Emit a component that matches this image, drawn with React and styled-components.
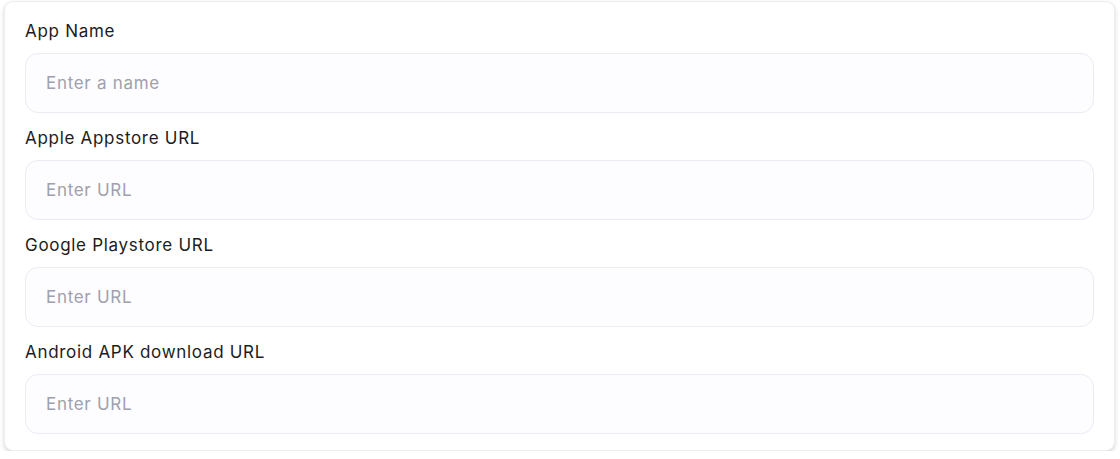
import React from "react"
import styled, { createGlobalStyle } from "styled-components"

const GlobalStyle = createGlobalStyle`
  body {
    margin: 0;
    background: #ffffff;
    font-family: "Inter", "Noto Sans", sans-serif;
  }
`

const Page = styled.div`
  padding: 1px 5px 0 4px;
`

const Card = styled.div`
  background: #ffffff;
  border: 1px solid #ececf2;
  border-radius: 9px;
  box-shadow: 0 2px 4px rgba(0, 0, 0, 0.16);
  padding: 19px 20px 16px 20px;
  display: flex;
  flex-direction: column;
  gap: 15px;
`

const Field = styled.div`
  display: flex;
  flex-direction: column;
  gap: 12px;
`

const Label = styled.label`
  font-size: 17px;
  line-height: 20px;
  color: #1c1c22;
  letter-spacing: 0.7px;
`

const Input = styled.input`
  box-sizing: border-box;
  width: 100%;
  height: 60px;
  border: 1px solid #ebebf3;
  border-radius: 13px;
  background: #fdfdff;
  padding: 0 20px;
  font-family: inherit;
  font-size: 17px;
  letter-spacing: 0.7px;
  color: #1c1c22;
  outline: none;

  &::placeholder {
    color: #a0a0ac;
  }
`

const fields = [
  { label: "App Name", placeholder: "Enter a name" },
  { label: "Apple Appstore URL", placeholder: "Enter URL" },
  { label: "Google Playstore URL", placeholder: "Enter URL" },
  { label: "Android APK download URL", placeholder: "Enter URL" },
]

const App = () => {
  return (
    <>
      <GlobalStyle />
      <Page>
        <Card>
          {fields.map((f) => (
            <Field key={f.label}>
              <Label>{f.label}</Label>
              <Input type="text" placeholder={f.placeholder} />
            </Field>
          ))}
        </Card>
      </Page>
    </>
  )
}

export default App
